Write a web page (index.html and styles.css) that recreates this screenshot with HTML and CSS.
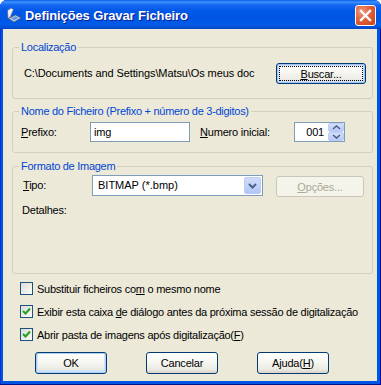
FILE: index.html
```html
<!DOCTYPE html>
<html lang="pt">

<head>
    <meta charset="UTF-8">
    <title>Definições Gravar Ficheiro</title>
    <link rel="stylesheet" href="styles.css">
</head>

<body>
    <div class="window">
        <div class="titlebar">
            <svg class="title-icon" width="16" height="16" viewBox="0 0 16 16">
                <path d="M1.5 3.5 L5 1 L7.5 2.5 L4 10.5 L2 11.5 Z" fill="#eef2fa" stroke="#56688c" stroke-width="0.7"/>
                <path d="M2.5 11.5 L9.5 8 L15 11 L8 15 Z" fill="#c9d0da" stroke="#4d5c78" stroke-width="0.7"/>
                <path d="M5 11.4 L9.6 9.2 L12.6 11 L8 13.2 Z" fill="#5d9be6"/>
            </svg>
            <span class="title">Definições Gravar Ficheiro</span>
            <button class="close">
                <svg width="19" height="19" viewBox="0 0 19 19">
                    <path d="M5 5 L14 14 M14 5 L5 14" stroke="#fff" stroke-width="2.3" stroke-linecap="square"/>
                </svg>
            </button>
        </div>

        <div class="client">
            <div class="group g-location">
                <span class="group-title">Localização</span>
                <span class="path">C:\Documents and Settings\Matsu\Os meus doc</span>
                <button class="btn btn-browse focused"><u>B</u>uscar...</button>
            </div>

            <div class="group g-name">
                <span class="group-title">Nome do Ficheiro (Prefixo + número de 3-digitos)</span>
                <label class="lbl lbl-prefix"><u>P</u>refixo:</label>
                <div class="textbox prefix">img</div>
                <label class="lbl lbl-start"><u>N</u>umero inicial:</label>
                <div class="textbox spin">
                    <span class="spin-value">001</span>
                    <span class="spin-buttons">
                        <span class="spin-btn">
                            <svg width="9" height="5" viewBox="0 0 9 5"><path d="M1 4 L4.5 1 L8 4" fill="none" stroke="#4d6185" stroke-width="1.6"/></svg>
                        </span>
                        <span class="spin-btn">
                            <svg width="9" height="5" viewBox="0 0 9 5"><path d="M1 1 L4.5 4 L8 1" fill="none" stroke="#4d6185" stroke-width="1.6"/></svg>
                        </span>
                    </span>
                </div>
            </div>

            <div class="group g-format">
                <span class="group-title">Formato de Imagem</span>
                <div class="format-row">
                    <label class="lbl lbl-type"><u>T</u>ipo:</label>
                    <div class="select">
                        <span class="select-value">BITMAP (*.bmp)</span>
                        <span class="select-arrow">
                            <svg width="9" height="6" viewBox="0 0 9 6"><path d="M1 1 L4.5 4.5 L8 1" fill="none" stroke="#4d6185" stroke-width="2"/></svg>
                        </span>
                    </div>
                    <button class="btn btn-options" disabled><u>O</u>pções...</button>
                </div>
                <div class="details">Detalhes:</div>
            </div>

            <div class="checks">
                <label class="check">
                    <span class="box"></span>
                    <span class="check-text">Substituir ficheiros co<u>m</u> o mesmo nome</span>
                </label>
                <label class="check">
                    <span class="box checked">
                        <svg width="11" height="11" viewBox="0 0 11 11"><path d="M2 5 L4.5 7.5 L9 2.5" fill="none" stroke="#21a121" stroke-width="2"/></svg>
                    </span>
                    <span class="check-text">Exibir esta caixa <u>d</u>e diálogo antes da próxima sessão de digitalização</span>
                </label>
                <label class="check">
                    <span class="box checked">
                        <svg width="11" height="11" viewBox="0 0 11 11"><path d="M2 5 L4.5 7.5 L9 2.5" fill="none" stroke="#21a121" stroke-width="2"/></svg>
                    </span>
                    <span class="check-text">Abrir pasta de imagens após digitalização(<u>F</u>)</span>
                </label>
            </div>

            <div class="actions">
                <button class="btn default">OK</button>
                <button class="btn">Cancelar</button>
                <button class="btn">Ajuda(<u>H</u>)</button>
            </div>
        </div>
    </div>
</body>

</html>
```

FILE: styles.css
```css
body {
    margin: 0;
    background-color: #ffffff;
    font-family: 'Liberation Sans', Arial, sans-serif;
    font-size: 11px;
    letter-spacing: -0.2px;
    color: #000;
}

.window {
    width: 381px;
    height: 385px;
    box-sizing: border-box;
    display: flex;
    flex-direction: column;
    padding: 0 4px 4px 3px;
    background-color: #0055e5;
    border-radius: 7px 7px 0 0;
    box-shadow: inset -1px -1px 0 #00138c, inset 1px 0 0 #0831d9;
}

.titlebar {
    flex: none;
    height: 29px;
    margin: 0 -4px 0 -3px;
    padding: 0 5px 0 6px;
    display: flex;
    align-items: center;
    gap: 3px;
    border-radius: 7px 7px 0 0;
    background: linear-gradient(#0a5fe8 0, #3b91ff 2px, #1467f0 5px, #0058e8 11px, #0055e3 60%, #005be9 85%, #0046c6 100%);
}

.title-icon {
    flex: none;
}

.title {
    color: #fff;
    font-weight: bold;
    font-size: 13px;
    letter-spacing: -0.1px;
    text-shadow: 1px 1px 0 #0a1e8c;
    padding-top: 1px;
}

.close {
    margin-left: auto;
    align-self: flex-start;
    margin-top: 5px;
    width: 21px;
    height: 21px;
    padding: 0;
    border: 1px solid #fff;
    border-radius: 3px;
    background: radial-gradient(circle at 30% 30%, #f09a7e 0, #e2603b 45%, #c6411c 100%);
    display: flex;
    align-items: center;
    justify-content: center;
}

.client {
    flex: 1;
    display: flex;
    flex-direction: column;
    padding: 18px 4px 0 9px;
    background-color: #ece9d8;
}

.group {
    position: relative;
    box-sizing: border-box;
    display: flex;
    align-items: flex-start;
    border: 1px solid #d0d0bf;
    border-radius: 3px;
}

.group-title {
    position: absolute;
    top: -8px;
    left: 6px;
    padding: 0 2px;
    line-height: 14px;
    letter-spacing: -0.28px;
    color: #0046d5;
    background-color: #ece9d8;
}

.g-location {
    height: 52px;
    padding: 15px 6px 0 11px;
    justify-content: space-between;
}

.path {
    line-height: 21px;
    letter-spacing: -0.1px;
}

.g-name {
    margin-top: 12px;
    height: 42px;
    padding: 10px 0 0 8px;
}

.lbl {
    line-height: 20px;
}

.lbl-prefix {
    width: 69px;
}

.lbl-start {
    width: 94px;
    margin-left: 10px;
}

.textbox {
    box-sizing: border-box;
    height: 20px;
    border: 1px solid #7f9db9;
    background-color: #fff;
    line-height: 18px;
}

.prefix {
    width: 100px;
    padding-left: 3px;
}

.spin {
    width: 51px;
    display: flex;
    justify-content: flex-end;
}

.spin-value {
    padding-right: 4px;
}

.spin-buttons {
    display: flex;
    flex-direction: column;
    width: 16px;
}

.spin-btn {
    flex: 1;
    display: flex;
    align-items: center;
    justify-content: center;
    border: 1px solid #bccdf4;
    border-radius: 2px;
    background: linear-gradient(#d3defa, #b6c9f6);
}

.g-format {
    margin-top: 13px;
    height: 108px;
    flex-direction: column;
    padding: 8px 0 0 10px;
}

.format-row {
    display: flex;
    align-items: flex-start;
}

.lbl-type {
    width: 69px;
    line-height: 21px;
}

.select {
    box-sizing: border-box;
    width: 171px;
    height: 21px;
    display: flex;
    justify-content: space-between;
    padding: 1px;
    border: 1px solid #7f9db9;
    background-color: #fff;
}

.select-value {
    padding-left: 4px;
    line-height: 17px;
    letter-spacing: 0;
}

.select-arrow {
    width: 17px;
    display: flex;
    align-items: center;
    justify-content: center;
    border: 1px solid #bccdf4;
    border-radius: 2px;
    box-sizing: border-box;
    background: linear-gradient(#d0dcfb, #b2c6f6);
}

.details {
    margin: 7px 0 0 -1px;
    line-height: 13px;
}

.btn {
    position: relative;
    box-sizing: border-box;
    height: 21px;
    padding: 0;
    font: inherit;
    letter-spacing: inherit;
    color: #000;
    border: 1px solid #003c74;
    border-radius: 3px;
    background: linear-gradient(#ffffff, #f6f6f2 45%, #ecebe4 80%, #d8d3c8);
}

.btn-browse {
    width: 90px;
}

.focused {
    box-shadow: inset 0 0 0 1px #a6c2f0, inset 0 0 0 2px #cde2fc;
}

.focused::after {
    content: "";
    position: absolute;
    inset: 2px;
    border: 1px dotted #000;
}

.btn-options {
    width: 88px;
    margin: 1px 0 0 13px;
    color: #aca899;
    border-color: #c9c7ba;
    background: #f5f4ea;
}

.checks {
    margin-top: 8px;
    padding-left: 8px;
    display: flex;
    flex-direction: column;
    gap: 10px;
}

.check {
    height: 13px;
    display: flex;
    align-items: center;
    gap: 4px;
}

.check-text {
    white-space: nowrap;
    letter-spacing: -0.25px;
}

.box {
    flex: none;
    box-sizing: border-box;
    width: 13px;
    height: 13px;
    border: 1px solid #1c5180;
    background: linear-gradient(135deg, #dcdcd5, #fbfbf9);
    display: flex;
    align-items: center;
    justify-content: center;
}

.actions {
    margin-top: 11px;
    padding-left: 23px;
    display: flex;
    gap: 39px;
}

.actions .btn {
    width: 72px;
    height: 22px;
}

.default {
    box-shadow: inset 0 0 0 1px #b5cdf2, inset 0 -1px 0 2px #cee2fb;
}
```
